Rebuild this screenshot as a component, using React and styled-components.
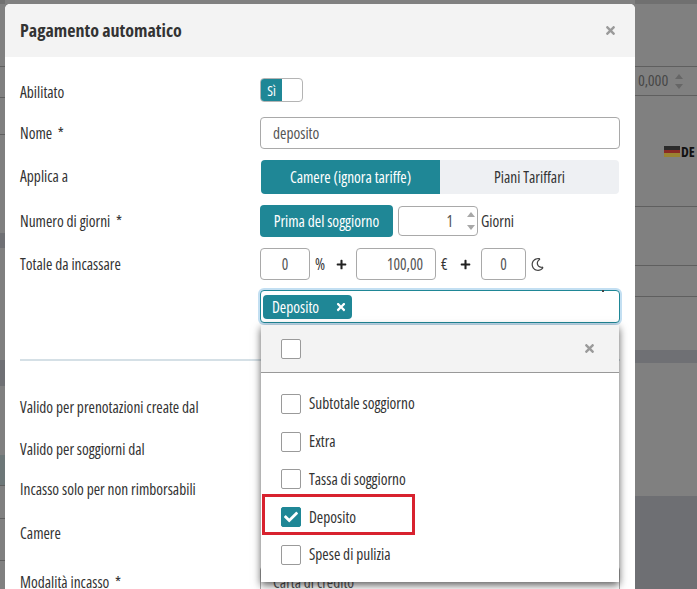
import React from "react";
import styled, { createGlobalStyle } from "styled-components";
import { FaTimes, FaPlus, FaCheck, FaRegMoon } from "react-icons/fa";

const TEAL = "#1f8796";
const FONT = `"Open Sans", "Liberation Sans", sans-serif`;

const Global = createGlobalStyle`
    html, body {
        margin: 0;
        padding: 0;
        background: #808080;
    }
    * {
        box-sizing: border-box;
    }
`;

const Page = styled.div`
    position: relative;
    width: 697px;
    height: 589px;
    overflow: hidden;
    display: grid;
    grid-template-columns: 5px 630px 62px;
    background: #808080;
    font-family: ${FONT};
    font-stretch: 75%;
    font-size: 15.4px;
    color: #333;
`;

const BackColumn = styled.div`
    display: flex;
    flex-direction: column;
    grid-column: ${(p) => p.$col};
`;

const Band = styled.div`
    height: ${(p) => p.$h}px;
    background: ${(p) => p.$bg || "#808080"};
    border-bottom: ${(p) => (p.$line ? "1px solid #5f5f5f" : "0")};
    display: flex;
    align-items: center;
    flex-shrink: 0;
    overflow: hidden;
    white-space: nowrap;
`;

const BackValue = styled.span`
    margin-left: 3px;
    font-family: "Roboto", sans-serif;
    font-size: 14px;
    color: #474747;
`;

const BackSpin = styled.span`
    margin-left: 7px;
    display: flex;
    flex-direction: column;
    gap: 5px;
`;

const Flag = styled.span`
    margin-left: 29px;
    width: 16px;
    height: 11px;
    flex-shrink: 0;
    background: linear-gradient(#2b2b2b 33%, #8a2a24 33% 66%, #9a8332 66%);
`;

const BackCode = styled.span`
    margin-left: 1px;
    font-weight: 700;
    font-size: 14px;
    color: #111;
`;

const Modal = styled.div`
    position: absolute;
    left: 5px;
    top: 4px;
    width: 630px;
    height: 640px;
    background: #fff;
    border-radius: 5px 5px 0 0;
`;

const Header = styled.div`
    height: 53px;
    padding: 0 15px;
    background: #f3f3f3;
    border-radius: 5px 5px 0 0;
    display: flex;
    align-items: center;
    justify-content: space-between;
`;

const Title = styled.h4`
    margin: 0 0 2px;
    font-size: 18px;
    font-weight: 700;
    color: #333;
`;

const CloseIcon = styled(FaTimes)`
    font-size: 13px;
    color: #9a9a9a;
    margin-right: 3px;
`;

const Body = styled.div`
    padding: 21px 15px 0;
    display: flex;
    flex-direction: column;
`;

const Row = styled.div`
    display: flex;
    align-items: center;
    height: ${(p) => p.$h}px;
    margin-bottom: ${(p) => p.$mb || 0}px;
    flex-shrink: 0;
`;

const Label = styled.label`
    width: 240px;
    flex-shrink: 0;
    margin: ${(p) => p.$mt ?? 0}px 0 ${(p) => p.$mb ?? 0}px;
`;

const Controls = styled.div`
    flex: 1;
    display: flex;
    align-items: center;
    height: 100%;
    position: relative;
`;

const Switch = styled.div`
    width: 43px;
    height: 24px;
    border: 1px solid #b4b4b4;
    border-radius: 4px;
    overflow: hidden;
    background: #fff;
`;

const SwitchOn = styled.div`
    width: 21px;
    height: 100%;
    background: ${TEAL};
    color: #fff;
    font-size: 14px;
    display: flex;
    align-items: center;
    justify-content: center;
`;

const Field = styled.div`
    height: ${(p) => p.$h || 32}px;
    width: ${(p) => (p.$w ? `${p.$w}px` : "100%")};
    margin-left: ${(p) => p.$ml || 0}px;
    border: 1px solid #a9a9a9;
    border-radius: 4px;
    background: #fff;
    color: #555;
    display: flex;
    align-items: center;
    justify-content: ${(p) => p.$justify || "flex-start"};
    padding: 0 ${(p) => p.$pr || 12}px 0 12px;
    flex-shrink: 0;
    position: relative;
`;

const Segments = styled.div`
    margin-left: 1px;
    width: 358px;
    height: 34px;
    display: flex;
    border-radius: 4px;
    overflow: hidden;
`;

const Segment = styled.div`
    width: ${(p) => p.$w}px;
    background: ${(p) => (p.$active ? TEAL : "#eef0f3")};
    color: ${(p) => (p.$active ? "#fff" : "#333")};
    display: flex;
    align-items: center;
    justify-content: center;
`;

const TealButton = styled.div`
    width: 133px;
    height: 32px;
    background: ${TEAL};
    color: #fff;
    border-radius: 4px;
    display: flex;
    align-items: center;
    justify-content: center;
    flex-shrink: 0;
    white-space: nowrap;
`;

const Spinner = styled.span`
    position: absolute;
    right: 2px;
    top: 5px;
    display: flex;
    flex-direction: column;
    gap: 8px;
`;

const Triangle = styled.i`
    display: block;
    width: 0;
    height: 0;
    border-left: 4px solid transparent;
    border-right: 4px solid transparent;
    border-bottom: ${(p) => (p.$up ? `5px solid ${p.$c}` : "0")};
    border-top: ${(p) => (p.$up ? "0" : `5px solid ${p.$c}`)};
`;

const Unit = styled.span`
    margin-left: ${(p) => p.$ml}px;
    width: ${(p) => (p.$w ? `${p.$w}px` : "auto")};
    flex-shrink: 0;
    color: #333;
`;

const Plus = styled(FaPlus)`
    font-size: 11px;
    color: #222;
    margin-left: ${(p) => p.$ml}px;
    margin-right: ${(p) => p.$mr}px;
    flex-shrink: 0;
`;

const Moon = styled(FaRegMoon)`
    font-size: 13px;
    color: #444;
    margin-left: 5px;
`;

const SelectBox = styled.div`
    width: 360px;
    height: 33px;
    border: 1px solid ${TEAL};
    border-radius: 4px;
    box-shadow: 0 0 0 2px #c3dff2;
    background: #fff;
    padding: 4px 2px;
    position: relative;
`;

const Tick = styled.span`
    position: absolute;
    right: 15px;
    top: -1px;
    width: 2px;
    height: 2px;
    background: #444;
`;

const Tag = styled.div`
    width: 89px;
    height: 24px;
    background: ${TEAL};
    color: #fff;
    border-radius: 4px;
    padding: 0 5px 0 9px;
    display: flex;
    align-items: center;
    justify-content: space-between;
`;

const TagClose = styled(FaTimes)`
    font-size: 12px;
    color: #fff;
`;

const Divider = styled.div`
    height: 2px;
    background: #d5e0e6;
    margin: 36px 0 30px;
    flex-shrink: 0;
`;

const Dropdown = styled.div`
    position: absolute;
    left: 1px;
    top: 35px;
    width: 358px;
    height: 257px;
    background: #fff;
    box-shadow: 0 3px 8px rgba(0, 0, 0, 0.65);
    z-index: 2;
`;

const DropHeader = styled.div`
    height: 48px;
    background: #f3f3f3;
    border-bottom: 1px solid #999;
    display: flex;
    align-items: center;
    justify-content: space-between;
    padding: 0 23px 0 20px;
`;

const DropClose = styled(FaTimes)`
    font-size: 13px;
    color: #9a9a9a;
`;

const DropList = styled.div`
    padding-top: 12px;
`;

const DropItem = styled.div`
    position: relative;
    height: 37.75px;
    padding-left: 20px;
    display: flex;
    align-items: center;
    gap: 8px;
`;

const Box = styled.span`
    width: 20px;
    height: 20px;
    border: 1px solid ${(p) => (p.$checked ? TEAL : "#9a9a9a")};
    border-radius: 2px;
    background: ${(p) => (p.$checked ? TEAL : "#fff")};
    display: flex;
    align-items: center;
    justify-content: center;
    flex-shrink: 0;
`;

const BoxCheck = styled(FaCheck)`
    font-size: 14px;
    color: #fff;
`;

const Highlight = styled.span`
    position: absolute;
    left: 1px;
    top: -4px;
    width: 153px;
    height: 41px;
    border: 3px solid #d8222f;
`;

const items = ["Subtotale soggiorno", "Extra", "Tassa di soggiorno", "Deposito", "Spese di pulizia"];

function Spin({ color }) {
    return (
        <>
            <Triangle $up $c={color} />
            <Triangle $c={color} />
        </>
    );
}

export default function App() {
    return (
        <Page>
            <Global />
            <BackColumn $col={1}>
                <Band $h={4} $bg="#707070" />
                <Band $h={63} $line />
                <Band $h={31} $line />
                <Band $h={37} $line />
                <Band $h={98} />
                <Band $h={15} $bg="#6f7074" />
                <Band $h={112} />
                <Band $h={26} $bg="#6f7074" />
                <Band $h={69} />
                <Band $h={31} $bg="#6d7778" $line />
                <Band $h={33} $line />
                <Band $h={42} $line />
                <Band $h={28} />
            </BackColumn>
            <BackColumn $col={3}>
                <Band $h={4} $bg="#707070" />
                <Band $h={63} $line />
                <Band $h={29} $line>
                    <BackValue>0,000</BackValue>
                    <BackSpin>
                        <Spin color="#666" />
                    </BackSpin>
                </Band>
                <Band $h={111} $line>
                    <Flag />
                    <BackCode>DE</BackCode>
                </Band>
                <Band $h={59} $line />
                <Band $h={31} $line />
                <Band $h={53} />
                <Band $h={13} $bg="#6f7074" />
                <Band $h={133} />
                <Band $h={94} $bg="#6e6f73" />
            </BackColumn>
            <Modal>
                <Header>
                    <Title>Pagamento automatico</Title>
                    <CloseIcon />
                </Header>
                <Body>
                    <Row $h={24} $mb={15}>
                        <Label $mt={4}>Abilitato</Label>
                        <Controls>
                            <Switch>
                                <SwitchOn>Sì</SwitchOn>
                            </Switch>
                        </Controls>
                    </Row>
                    <Row $h={32} $mb={11}>
                        <Label>Nome &nbsp;*</Label>
                        <Controls>
                            <Field>deposito</Field>
                        </Controls>
                    </Row>
                    <Row $h={34} $mb={11}>
                        <Label $mb={2}>Applica a</Label>
                        <Controls>
                            <Segments>
                                <Segment $active $w={179}>Camere (ignora tariffe)</Segment>
                                <Segment $w={179}>Piani Tariffari</Segment>
                            </Segments>
                        </Controls>
                    </Row>
                    <Row $h={32} $mb={11}>
                        <Label>Numero di giorni &nbsp;*</Label>
                        <Controls>
                            <TealButton>Prima del soggiorno</TealButton>
                            <Field $w={80} $h={30} $ml={5} $pr={24} $justify="flex-end">
                                1
                                <Spinner>
                                    <Spin color="#a8a8a8" />
                                </Spinner>
                            </Field>
                            <Unit $ml={3}>Giorni</Unit>
                        </Controls>
                    </Row>
                    <Row $h={32} $mb={10}>
                        <Label>Totale da incassare</Label>
                        <Controls>
                            <Field $w={50} $justify="center">0</Field>
                            <Unit $ml={5} $w={12}>%</Unit>
                            <Plus $ml={9} $mr={9} />
                            <Field $w={80} $justify="flex-end">100,00</Field>
                            <Unit $ml={5} $w={9}>€</Unit>
                            <Plus $ml={10} $mr={10} />
                            <Field $w={45} $justify="center">0</Field>
                            <Moon />
                        </Controls>
                    </Row>
                    <Row $h={33}>
                        <Label />
                        <Controls>
                            <SelectBox>
                                <Tick />
                                <Tag>
                                    Deposito
                                    <TagClose />
                                </Tag>
                            </SelectBox>
                            <Dropdown>
                                <DropHeader>
                                    <Box />
                                    <DropClose />
                                </DropHeader>
                                <DropList>
                                    {items.map((item) => (
                                        <DropItem key={item}>
                                            {item === "Deposito" && <Highlight />}
                                            <Box $checked={item === "Deposito"}>
                                                {item === "Deposito" && <BoxCheck />}
                                            </Box>
                                            <span>{item}</span>
                                        </DropItem>
                                    ))}
                                </DropList>
                            </Dropdown>
                        </Controls>
                    </Row>
                    <Divider />
                    <Row $h={32} $mb={10}>
                        <Label>Valido per prenotazioni create dal</Label>
                    </Row>
                    <Row $h={32} $mb={8}>
                        <Label>Valido per soggiorni dal</Label>
                    </Row>
                    <Row $h={32} $mb={12}>
                        <Label>Incasso solo per non rimborsabili</Label>
                    </Row>
                    <Row $h={32} $mb={17}>
                        <Label>Camere</Label>
                    </Row>
                    <Row $h={32}>
                        <Label>Modalità incasso &nbsp;*</Label>
                        <Controls>
                            <Field>Carta di credito</Field>
                        </Controls>
                    </Row>
                </Body>
            </Modal>
        </Page>
    );
}
